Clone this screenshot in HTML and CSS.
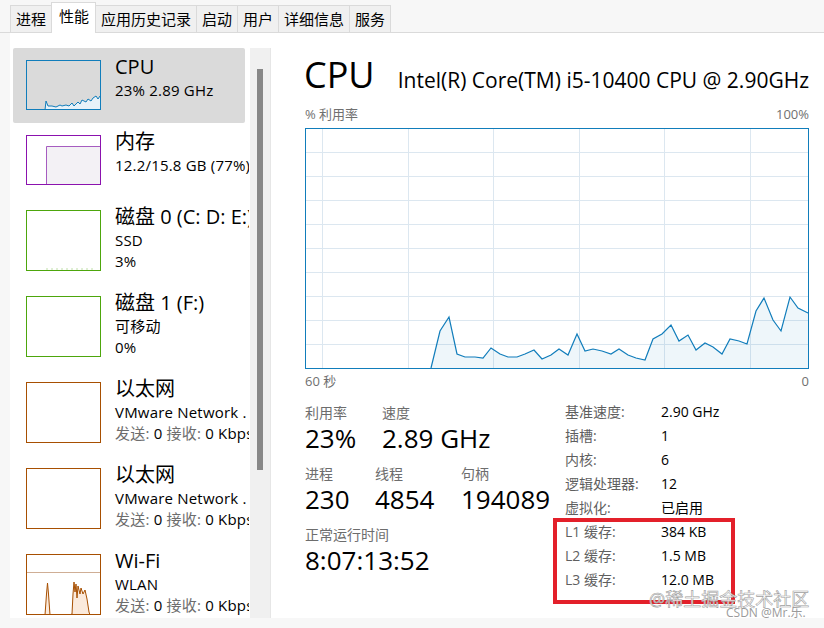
FILE: index.html
```html
<!DOCTYPE html>
<html lang="zh-CN">
<head>
    <meta charset="UTF-8">
    <title>任务管理器 - 性能</title>
    <link rel="stylesheet" href="styles.css">
</head>
<body>
    <div class="tabs">
        <div class="tab">进程</div>
        <div class="tab active">性能</div>
        <div class="tab">应用历史记录</div>
        <div class="tab">启动</div>
        <div class="tab">用户</div>
        <div class="tab">详细信息</div>
        <div class="tab">服务</div>
    </div>

    <div class="window">
        <div class="list">
            <!-- CPU -->
            <div class="item selected">
                <svg class="thumb" width="75" height="50" viewBox="0 0 75 50">
                    <polygon fill="#e8f2f9" points="19,50 20,41 22,46 26,46 30,47 34,45 36,46 40,45 43,46 46,43 48,46 52,42 54,44 56,40 60,42 62,39 65,41 67,38 70,36 72,39 74,36 74,50"/>
                    <polyline fill="none" stroke="#117dbb" stroke-width="1" points="19,50 20,41 22,46 26,46 30,47 34,45 36,46 40,45 43,46 46,43 48,46 52,42 54,44 56,40 60,42 62,39 65,41 67,38 70,36 72,39 74,36"/>
                    <rect x="0.5" y="0.5" width="74" height="49" fill="none" stroke="#117dbb"/>
                </svg>
                <div class="info">
                    <div class="name">CPU</div>
                    <div class="sub">23% 2.89 GHz</div>
                </div>
            </div>

            <!-- 内存 -->
            <div class="item">
                <svg class="thumb" width="75" height="50" viewBox="0 0 75 50">
                    <rect x="20" y="11" width="55" height="39" fill="#f3f1f5"/>
                    <polyline fill="none" stroke="#a65cc0" stroke-width="1" points="20.5,50 20.5,11.5 75,11.5"/>
                    <rect x="0.5" y="0.5" width="74" height="49" fill="none" stroke="#8b12ae"/>
                </svg>
                <div class="info">
                    <div class="name">内存</div>
                    <div class="sub">12.2/15.8 GB (77%)</div>
                </div>
            </div>

            <!-- 磁盘 0 -->
            <div class="item tall">
                <svg class="thumb" width="75" height="61" viewBox="0 0 75 61">
                    <line x1="20" y1="59" x2="70" y2="59" stroke="#bfdfa8" stroke-dasharray="2 3"/>
                    <rect x="0.5" y="0.5" width="74" height="60" fill="none" stroke="#4da60c"/>
                </svg>
                <div class="info">
                    <div class="name">磁盘 0 (C: D: E:)</div>
                    <div class="sub">SSD</div>
                    <div class="sub">3%</div>
                </div>
            </div>

            <!-- 磁盘 1 -->
            <div class="item tall">
                <svg class="thumb" width="75" height="61" viewBox="0 0 75 61">
                    <rect x="0.5" y="0.5" width="74" height="60" fill="none" stroke="#4da60c"/>
                </svg>
                <div class="info">
                    <div class="name">磁盘 1 (F:)</div>
                    <div class="sub">可移动</div>
                    <div class="sub">0%</div>
                </div>
            </div>

            <!-- 以太网 -->
            <div class="item tall">
                <svg class="thumb" width="75" height="61" viewBox="0 0 75 61">
                    <rect x="0.5" y="0.5" width="74" height="60" fill="none" stroke="#a74f01"/>
                </svg>
                <div class="info">
                    <div class="name">以太网</div>
                    <div class="sub">VMware Network .</div>
                    <div class="sub"><span class="dim">发送:</span> 0 <span class="dim">接收:</span> 0 Kbps</div>
                </div>
            </div>

            <div class="item tall">
                <svg class="thumb" width="75" height="61" viewBox="0 0 75 61">
                    <rect x="0.5" y="0.5" width="74" height="60" fill="none" stroke="#a74f01"/>
                </svg>
                <div class="info">
                    <div class="name">以太网</div>
                    <div class="sub">VMware Network .</div>
                    <div class="sub"><span class="dim">发送:</span> 0 <span class="dim">接收:</span> 0 Kbps</div>
                </div>
            </div>

            <!-- Wi-Fi -->
            <div class="item tall">
                <svg class="thumb" width="75" height="61" viewBox="0 0 75 61">
                    <line x1="0" y1="18.5" x2="75" y2="18.5" stroke="#cfae95"/>
                    <polygon fill="#fbeadc" points="19,61 20.5,40 21.5,29 22.5,40 24,61"/>
                    <polygon fill="#fbeadc" points="44,61 46,60 47,40 48,28 49,38 50,30 51,44 52,32 54,40 55,34 57,40 59,36 61,45 63,58 64,61"/>
                    <polyline fill="none" stroke="#a74f01" points="19,61 20.5,40 21.5,29 22.5,40 24,61"/>
                    <polyline fill="none" stroke="#a74f01" points="44,61 46,60 47,40 48,28 49,38 50,30 51,44 52,32 54,40 55,34 57,40 59,36 61,45 63,58 64,61"/>
                    <rect x="0.5" y="0.5" width="74" height="60" fill="none" stroke="#a74f01"/>
                </svg>
                <div class="info">
                    <div class="name">Wi-Fi</div>
                    <div class="sub">WLAN</div>
                    <div class="sub"><span class="dim">发送:</span> 0 <span class="dim">接收:</span> 0 Kbps</div>
                </div>
            </div>
        </div>

        <div class="scrollbar"><div class="scroll-thumb"></div></div>

        <div class="main">
            <div class="header">
                <div class="title">CPU</div>
                <div class="model">Intel(R) Core(TM) i5-10400 CPU @ 2.90GHz</div>
            </div>

            <div class="axis">
                <span>% 利用率</span>
                <span>100%</span>
            </div>

            <svg class="graph" width="504" height="241" viewBox="0 0 504 241">
                <g stroke="#dce7f0" stroke-width="1">
                    <line x1="17.5" y1="0" x2="17.5" y2="241"/>
                    <line x1="103.5" y1="0" x2="103.5" y2="241"/>
                    <line x1="188.5" y1="0" x2="188.5" y2="241"/>
                    <line x1="274.5" y1="0" x2="274.5" y2="241"/>
                    <line x1="359.5" y1="0" x2="359.5" y2="241"/>
                    <line x1="445.5" y1="0" x2="445.5" y2="241"/>
                    <line x1="0" y1="24.5" x2="504" y2="24.5"/>
                    <line x1="0" y1="48.5" x2="504" y2="48.5"/>
                    <line x1="0" y1="72.5" x2="504" y2="72.5"/>
                    <line x1="0" y1="96.5" x2="504" y2="96.5"/>
                    <line x1="0" y1="120.5" x2="504" y2="120.5"/>
                    <line x1="0" y1="144.5" x2="504" y2="144.5"/>
                    <line x1="0" y1="168.5" x2="504" y2="168.5"/>
                    <line x1="0" y1="192.5" x2="504" y2="192.5"/>
                    <line x1="0" y1="216.5" x2="504" y2="216.5"/>
                </g>
                <polygon fill="rgba(17,125,187,0.07)" points="126,240 135,203 144,189 152,226 160,229 170,229 178,230 186,220 195,226 203,229 212,229 220,226 229,222 237,231 246,227 254,221 263,227 272,206 280,223 288,221 297,223 306,226 314,221 323,227 331,230 340,232 348,211 357,206 366,197 374,213 383,207 391,222 400,215 408,219 417,226 425,211 434,213 442,216 451,183 459,170 468,192 476,203 485,169 493,180 503,185 503,240"/>
                <polyline fill="none" stroke="#117dbb" stroke-width="1.2" points="126,240 135,203 144,189 152,226 160,229 170,229 178,230 186,220 195,226 203,229 212,229 220,226 229,222 237,231 246,227 254,221 263,227 272,206 280,223 288,221 297,223 306,226 314,221 323,227 331,230 340,232 348,211 357,206 366,197 374,213 383,207 391,222 400,215 408,219 417,226 425,211 434,213 442,216 451,183 459,170 468,192 476,203 485,169 493,180 503,185"/>
                <rect x="0.5" y="0.5" width="503" height="240" fill="none" stroke="#117dbb"/>
            </svg>

            <div class="axis">
                <span>60 秒</span>
                <span>0</span>
            </div>

            <div class="stats">
                <div class="left">
                    <div class="stat-row cols-2">
                        <div><div class="label">利用率</div><div class="value">23%</div></div>
                        <div><div class="label">速度</div><div class="value">2.89 GHz</div></div>
                    </div>
                    <div class="stat-row cols-3">
                        <div><div class="label">进程</div><div class="value">230</div></div>
                        <div><div class="label">线程</div><div class="value">4854</div></div>
                        <div><div class="label">句柄</div><div class="value">194089</div></div>
                    </div>
                    <div class="stat-row">
                        <div><div class="label">正常运行时间</div><div class="value">8:07:13:52</div></div>
                    </div>
                </div>

                <div class="specs">
                    <span class="key">基准速度:</span><span>2.90 GHz</span>
                    <span class="key">插槽:</span><span>1</span>
                    <span class="key">内核:</span><span>6</span>
                    <span class="key">逻辑处理器:</span><span>12</span>
                    <span class="key">虚拟化:</span><span>已启用</span>
                    <span class="key">L1 缓存:</span><span>384 KB</span>
                    <span class="key">L2 缓存:</span><span>1.5 MB</span>
                    <span class="key">L3 缓存:</span><span>12.0 MB</span>
                </div>

                <div class="highlight"></div>
                <div class="watermark">@稀土掘金技术社区</div>
                <div class="credit">CSDN @Mr.乐.</div>
            </div>
        </div>
    </div>
</body>
</html>
```

FILE: styles.css
```css
body {
    margin: 0;
    width: 824px;
    height: 628px;
    overflow: hidden;
    background: #f7f7f7;
    font-family: "Open Sans", "Noto Sans CJK SC", sans-serif;
    color: #000;
}

/* tabs */
.tabs {
    display: flex;
    align-items: flex-end;
    height: 33px;
    padding-left: 10px;
    box-sizing: border-box;
    box-shadow: inset 0 -1px #dadada;
}
.tab {
    height: 28px;
    padding: 0 5px;
    margin-right: -1px;
    border: 1px solid #dadada;
    background: #f0f0f0;
    font-size: 15px;
    line-height: 26px;
    box-sizing: border-box;
}
.tab.active {
    position: relative;
    z-index: 1;
    height: 31px;
    padding: 0 6px 0 7px;
    background: #fff;
    border-bottom: none;
    line-height: 26px;
}

/* window body */
.window {
    display: flex;
    margin-left: 10px;
    height: 585px;
    background: #fff;
}

.list {
    width: 240px;
    padding-top: 15px;
    box-sizing: border-box;
    overflow: hidden;
}
.item {
    display: flex;
    align-items: flex-start;
    width: 232px;
    height: 75px;
    margin-left: 3px;
    padding: 12px 0 0 13px;
    box-sizing: border-box;
    border-radius: 2px;
}
.item.tall {
    height: 86px;
}
.item.selected {
    background: #dadada;
}
.thumb {
    flex: none;
    display: block;
}
.info {
    margin-top: -6px;
    margin-left: 14px;
    white-space: nowrap;
}
.name {
    font-size: 20px;
    line-height: 26px;
}
.sub {
    font-size: 15px;
    line-height: 21px;
    letter-spacing: 0.2px;
}
.dim {
    color: #6d6d6d;
}

.scrollbar {
    flex: none;
    width: 20px;
    margin-left: 1px;
    margin-top: 15px;
    background: #f0f0f0;
    border-right: 1px solid #e6e6e6;
}
.scroll-thumb {
    width: 6px;
    height: 401px;
    margin: 21px 0 0 7px;
    background: #888;
}

/* main panel */
.main {
    flex: 1;
    padding: 20px 15px 0 33px;
}
.header {
    display: flex;
    justify-content: space-between;
    align-items: baseline;
    height: 44px;
}
.title {
    font-size: 36px;
    line-height: 44px;
}
.model {
    font-size: 21px;
}
.axis {
    display: flex;
    justify-content: space-between;
    font-size: 13px;
    line-height: 18px;
    color: #707070;
    margin-left: 1px;
}
.header + .axis {
    margin-top: 8px;
    margin-bottom: 5px;
}
.graph {
    display: block;
    margin-left: 1px;
}
.graph + .axis {
    margin-top: 3px;
}

.stats {
    position: relative;
    display: flex;
    margin-top: 10px;
    margin-left: 1px;
}
.left {
    width: 260px;
    padding-top: 3px;
}
.stat-row {
    display: grid;
    margin-bottom: 10px;
}
.stat-row.cols-2 {
    grid-template-columns: 77px auto;
}
.stat-row.cols-3 {
    grid-template-columns: 70px 86px auto;
}
.label {
    font-size: 14px;
    line-height: 20px;
    color: #6d6d6d;
}
.value {
    font-size: 26px;
    line-height: 31px;
    white-space: nowrap;
}

.specs {
    display: grid;
    grid-template-columns: 96px auto;
    grid-auto-rows: 24px;
    font-size: 14px;
    line-height: 24px;
}
.key {
    color: #5f5f5f;
}

/* annotation over the screenshot */
.highlight {
    position: absolute;
    left: 248px;
    top: 118px;
    width: 182px;
    height: 86px;
    border: 4px solid #e3202a;
    box-sizing: border-box;
}
.watermark {
    position: absolute;
    left: 344px;
    top: 185px;
    font-size: 18px;
    color: rgba(255, 255, 255, 0.85);
    -webkit-text-stroke: 0.6px #a0a0a0;
    white-space: nowrap;
}
.credit {
    position: absolute;
    left: 421px;
    top: 205px;
    font-size: 12px;
    line-height: 16px;
    color: #9a9a9a;
    white-space: nowrap;
}
```
